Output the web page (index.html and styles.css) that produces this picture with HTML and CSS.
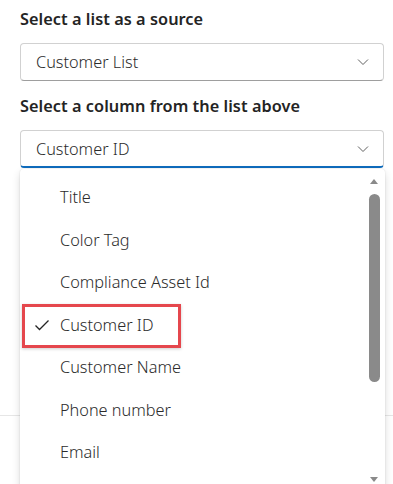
FILE: index.html
```html
<!DOCTYPE html>
<html>
<head>
<meta charset="utf-8">
<link rel="stylesheet" href="styles.css">
</head>
<body>
<div class="panel">
  <div class="field">
    <div class="label">Select a list as a source</div>
    <div class="dropdown">
      <span class="value">Customer List</span>
      <svg class="chev" width="12" height="8" viewBox="0 0 12 8"><path d="M1 1.5 L6 6.5 L11 1.5" fill="none" stroke="#616161" stroke-width="1"/></svg>
    </div>
  </div>
  <div class="field">
    <div class="label">Select a column from the list above</div>
    <div class="dropdown open">
      <span class="value">Customer ID</span>
      <svg class="chev" width="12" height="8" viewBox="0 0 12 8"><path d="M1 1.5 L6 6.5 L11 1.5" fill="none" stroke="#616161" stroke-width="1"/></svg>
      <div class="popup">
        <ul class="options">
          <li class="opt">Title</li>
          <li class="opt">Color Tag</li>
          <li class="opt">Compliance Asset Id</li>
          <li class="opt selected"><svg class="check" width="16" height="12" viewBox="0 0 16 12"><path d="M1.5 6.5 L5.5 10.5 L14.5 1.5" fill="none" stroke="#242424" stroke-width="1.3"/></svg>Customer ID<span class="highlight"></span></li>
          <li class="opt">Customer Name</li>
          <li class="opt">Phone number</li>
          <li class="opt">Email</li>
        </ul>
        <div class="scrollbar">
          <span class="arrow up"></span>
          <span class="thumb"></span>
          <span class="arrow down"></span>
        </div>
      </div>
    </div>
  </div>
  <div class="divider"></div>
</div>
</body>
</html>
```

FILE: styles.css
```css
html, body {
  margin: 0;
  padding: 0;
  background: #ffffff;
}
body {
  font-family: "Noto Sans", "Open Sans", sans-serif;
  color: #242424;
  overflow: hidden;
  height: 484px;
}
.panel {
  padding: 6px 9px 0 20px;
}
.field {
  display: flex;
  flex-direction: column;
}
.label {
  font-size: 16.3px;
  font-weight: 600;
  line-height: 26px;
  height: 26px;
  letter-spacing: 0.05px;
}
.field + .field {
  margin-top: 12px;
}
.dropdown {
  position: relative;
  margin-top: 11px;
  height: 36px;
  border: 1px solid #d1d1d1;
  border-bottom-color: #9e9e9e;
  border-radius: 4px;
  display: flex;
  align-items: center;
  padding: 0 14px 0 15px;
  font-size: 16.3px;
  font-weight: 350;
  color: #2b2b2b;
}
.dropdown.open {
  border-bottom: 2px solid #0f6cbd;
  height: 35px;
}
.value {
  flex: 1;
}
.chev {
  display: block;
}
.popup {
  position: absolute;
  left: -1px;
  top: 38px;
  width: 365px;
  height: 330px;
  background: #ffffff;
  border-radius: 4px;
  box-shadow: 0 0 2px rgba(0,0,0,0.12), 0 4px 8px rgba(0,0,0,0.14);
  display: flex;
}
.options {
  list-style: none;
  margin: 0;
  padding: 7px 0 0 0;
  flex: 1;
}
.opt {
  position: relative;
  height: 42.5px;
  display: flex;
  align-items: center;
  padding-left: 40px;
  font-size: 16.3px;
}
.opt.selected {
  padding-left: 14px;
}
.check {
  margin-right: 10px;
}
.highlight {
  position: absolute;
  left: 2px;
  top: 0;
  width: 153px;
  height: 38px;
  border: 3px solid #e5474d;
  box-shadow: 0 1px 3px rgba(0,0,0,0.2);
}
.scrollbar {
  width: 19px;
  display: flex;
  flex-direction: column;
  align-items: center;
  padding-top: 10px;
  padding-right: 3px;
  box-sizing: border-box;
}
.arrow {
  width: 0;
  height: 0;
  border-left: 4px solid transparent;
  border-right: 4px solid transparent;
}
.arrow.up {
  border-bottom: 5px solid #8a8a8a;
}
.arrow.down {
  border-top: 5px solid #8a8a8a;
  margin-top: 95px;
}
.thumb {
  width: 11px;
  height: 188px;
  margin-top: 10px;
  background: #8a8a8a;
  border-radius: 6px;
}
.divider {
  margin: 247px -9px 0 -20px;
  border-top: 1px solid #e6e6e6;
}
```
